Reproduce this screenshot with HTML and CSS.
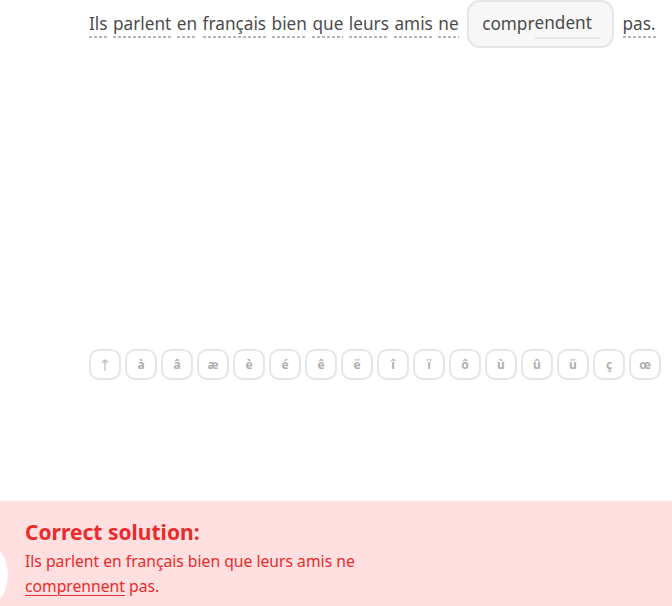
FILE: index.html
```html
<!DOCTYPE html>
<html lang="fr">
<head>
<meta charset="utf-8">
<title>Challenge</title>
<link rel="stylesheet" href="styles.css">
</head>
<body>
<div class="page">
  <main class="challenge">
    <div class="sentence">
      <span class="word">Ils</span>
      <span class="word">parlent</span>
      <span class="word">en</span>
      <span class="word">français</span>
      <span class="word">bien</span>
      <span class="word">que</span>
      <span class="word">leurs</span>
      <span class="word">amis</span>
      <span class="word">ne</span>
      <span class="blank"><span class="prefix">compr</span><span class="typed">endent</span></span>
      <span class="word">pas.</span>
    </div>
    <div class="keys">
      <button class="key key-shift">↑</button>
      <button class="key">à</button>
      <button class="key">â</button>
      <button class="key">æ</button>
      <button class="key">è</button>
      <button class="key">é</button>
      <button class="key">ê</button>
      <button class="key">ë</button>
      <button class="key">î</button>
      <button class="key">ï</button>
      <button class="key">ô</button>
      <button class="key">ù</button>
      <button class="key">û</button>
      <button class="key">ü</button>
      <button class="key">ç</button>
      <button class="key">œ</button>
    </div>
  </main>
  <footer class="result">
    <div class="result-icon"></div>
    <div class="result-body">
      <h2 class="result-title">Correct solution:</h2>
      <p class="result-text">Ils parlent en français bien que leurs amis ne <u>comprennent</u> pas.</p>
    </div>
  </footer>
</div>
</body>
</html>
```
FILE: styles.css
```css
* { box-sizing: border-box; }
html, body { margin: 0; padding: 0; }
body {
  width: 672px;
  height: 606px;
  overflow: hidden;
  background: #fff;
  font-family: "Noto Sans", "DejaVu Sans", sans-serif;
}
.page {
  height: 606px;
  display: flex;
  flex-direction: column;
}
.challenge {
  padding-left: 89px;
}
.sentence {
  display: flex;
  align-items: center;
  height: 48px;
  color: #4b4b4b;
  font-size: 17.2px;
  white-space: nowrap;
}
.word {
  margin-right: 5.5px;
  padding-bottom: 3px;
  padding-top: 3px;
  background-image: repeating-linear-gradient(to right, #b5b5b5 0 3px, transparent 3px 5px);
  background-size: 100% 2px;
  background-repeat: no-repeat;
  background-position: left bottom;
  line-height: 22px;
}
.blank {
  display: flex;
  align-items: center;
  height: 48px;
  margin: 0 9px 0 3px;
  padding: 0 12px 0 13px;
  background: #f7f7f7;
  border: 2px solid #e5e5e5;
  border-radius: 13px;
}
.prefix, .typed { line-height: 22px; padding-top: 3px; padding-bottom: 3px; }
.typed {
  display: inline-block;
  width: 65px;
  border-bottom: 2px solid #e5e5e5;
}
.keys {
  display: flex;
  gap: 4px;
  margin-top: 301px;
}
.key {
  width: 32px;
  height: 31px;
  padding: 0;
  background: #fff;
  border: 2px solid #e5e5e5;
  border-radius: 10px;
  color: #afafaf;
  font-family: "Noto Sans", "DejaVu Sans", sans-serif;
  font-size: 12px;
  font-weight: 700;
  display: flex;
  align-items: center;
  justify-content: center;
}
.key-shift {
  font-size: 16px;
  font-weight: 400;
  color: #c4c4c4;
}
.result {
  margin-top: auto;
  height: 105px;
  background: #ffdfe0;
  position: relative;
  overflow: hidden;
  padding: 17px 0 0 25px;
}
.result-icon {
  position: absolute;
  left: -74px;
  top: 33px;
  width: 82px;
  height: 82px;
  border-radius: 50%;
  background: #fff;
}
.result-title {
  margin: 0;
  font-size: 21px;
  line-height: 29px;
  font-weight: 700;
  color: #ea2b2b;
}
.result-text {
  margin: 2px 0 0;
  width: 365px;
  font-size: 15.7px;
  line-height: 25px;
  color: #ea2b2b;
}
.result-text u {
  text-decoration-thickness: 1px;
  text-underline-offset: 3px;
}
```
